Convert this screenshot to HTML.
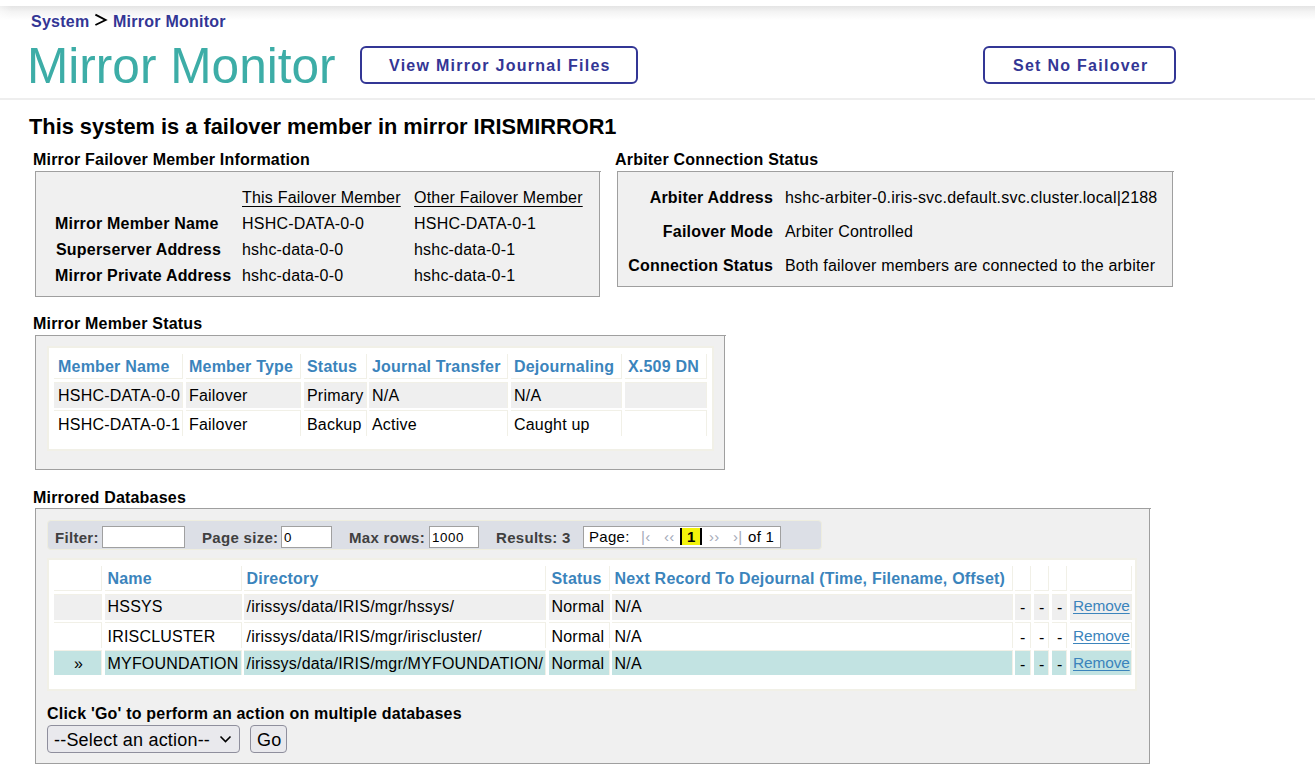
<!DOCTYPE html>
<html><head><meta charset="utf-8">
<style>
html,body{margin:0;padding:0;background:#fff;width:1315px;height:781px;overflow:hidden;position:relative;font-family:"Liberation Sans",sans-serif;color:#000;letter-spacing:0.2px;}
div,span{box-sizing:border-box;}
.a{position:absolute;white-space:nowrap;}
#shadow{position:absolute;left:0;top:6px;width:1315px;height:14px;background:linear-gradient(to bottom,#e4e4e4 0%,#f3f3f3 40%,#fff 100%);}
.crumb{font-size:16px;letter-spacing:0.25px;font-weight:bold;color:#333695;line-height:20px;}
#title{font-size:49.6px;color:#3DADA7;line-height:56px;}
.btn{position:absolute;height:38px;border:2px solid #333695;border-radius:6px;background:#fff;}
.btxt{color:#333695;font-weight:bold;font-size:16px;letter-spacing:1.27px;line-height:20px;}
#hr{position:absolute;left:0;top:98px;width:1315px;height:2px;background:#eeeeee;}
#h1{font-size:21.8px;font-weight:bold;line-height:26px;}
.sh{font-size:16px;font-weight:bold;line-height:20px;}
.box{position:absolute;background:#f0f0f0;border:1px solid #9f9f9f;}
.t{font-size:16px;line-height:20px;}
.b{font-weight:bold;}
.u{text-decoration:underline;text-underline-offset:3px;}
.tbl{position:absolute;background:#fff;border:2px solid #f1f0e7;}
.c{position:absolute;}
.th{border-right:1px solid #f1f0e7;border-bottom:1px solid #f1f0e7;}
.td{border-right:1px solid #f1f0e7;border-top:1px solid #f1f0e7;}
.g{background:#efefef;}
.sel{background:#c2e3e2;}
.hd{color:#3b84bc;font-weight:bold;}
.lnk{color:#3b84bc;text-decoration:underline;font-size:15.4px;letter-spacing:-0.1px;text-underline-offset:2px;}
.fb{position:absolute;background:#dcdfe6;border:1px solid #eeeddf;border-radius:4px;}
.fl{font-size:15px;font-weight:bold;color:#404040;line-height:20px;letter-spacing:0.3px;}
.p15{font-size:15px;line-height:20px;letter-spacing:0.3px;}
.iv{font-size:13.33px;line-height:20px;letter-spacing:0.6px;}
.inp{position:absolute;background:#fff;border:1px solid #a0a0a0;}
</style></head>
<body>
<div id="shadow"></div>
<div style="position:absolute;left:0;top:6px;width:12px;height:14px;background:linear-gradient(to right,rgba(255,255,255,0.45),rgba(255,255,255,0));"></div>
<div class="a crumb" style="left:31px;top:12px;">System</div>
<svg class="a" style="left:90px;top:10px" width="20" height="20" viewBox="90 10 20 20"><path d="M95.4 14.7 L105.6 20 L95.4 25" fill="none" stroke="#000" stroke-width="1.9" stroke-linejoin="miter"/></svg>
<div class="a crumb" style="left:113px;top:12px;">Mirror Monitor</div>
<div class="a " style="left:27px;top:38px;font-size:49.6px;color:#3DADA7;line-height:56px;letter-spacing:0;">Mirror Monitor</div>
<div class="btn" style="left:360px;top:46px;width:278px;height:38px;"></div>
<div class="a btxt" style="left:389px;top:56px;">View Mirror Journal Files</div>
<div class="btn" style="left:983px;top:46px;width:193px;height:38px;"></div>
<div class="a btxt" style="left:1013px;top:56px;">Set No Failover</div>
<div id="hr"></div>
<div class="a " style="left:29px;top:114px;font-size:21.8px;font-weight:bold;line-height:26px;letter-spacing:0;">This system is a failover member in mirror IRISMIRROR1</div>
<div class="a sh" style="left:33px;top:150px;">Mirror Failover Member Information</div>
<div class="box" style="left:35px;top:171px;width:565px;height:126px;"></div>
<div class="c" style="left:600px;top:171px;width:1px;height:1px;background:#9f9f9f;"></div>
<div class="a t u" style="left:242px;top:188px;">This Failover Member</div>
<div class="a t u" style="left:414px;top:188px;">Other Failover Member</div>
<div class="a t b" style="left:55px;top:214px;">Mirror Member Name</div>
<div class="a t" style="left:242px;top:214px;">HSHC-DATA-0-0</div>
<div class="a t" style="left:414px;top:214px;">HSHC-DATA-0-1</div>
<div class="a t b" style="left:56px;top:240px;">Superserver Address</div>
<div class="a t" style="left:242px;top:240px;">hshc-data-0-0</div>
<div class="a t" style="left:414px;top:240px;">hshc-data-0-1</div>
<div class="a t b" style="left:55px;top:266px;">Mirror Private Address</div>
<div class="a t" style="left:242px;top:266px;">hshc-data-0-0</div>
<div class="a t" style="left:414px;top:266px;">hshc-data-0-1</div>
<div class="a sh" style="left:615px;top:150px;">Arbiter Connection Status</div>
<div class="box" style="left:617px;top:171px;width:556px;height:116px;"></div>
<div class="c" style="left:1173px;top:171px;width:1px;height:1px;background:#9f9f9f;"></div>
<div class="a t b" style="right:542px;top:188px;">Arbiter Address</div>
<div class="a t" style="left:785px;top:188px;">hshc-arbiter-0.iris-svc.default.svc.cluster.local|2188</div>
<div class="a t b" style="right:542px;top:222px;">Failover Mode</div>
<div class="a t" style="left:785px;top:222px;">Arbiter Controlled</div>
<div class="a t b" style="right:542px;top:256px;">Connection Status</div>
<div class="a t" style="left:785px;top:256px;">Both failover members are connected to the arbiter</div>
<div class="a sh" style="left:33px;top:314px;">Mirror Member Status</div>
<div class="box" style="left:35px;top:335px;width:690px;height:135px;"></div>
<div class="c" style="left:725px;top:335px;width:1px;height:1px;background:#9f9f9f;"></div>
<div class="tbl" style="left:47px;top:346px;width:667px;height:105px;"></div>
<div class="c th" style="left:54px;top:354px;width:129px;height:25px;"></div>
<div class="a t hd" style="left:58px;top:357px;">Member Name</div>
<div class="c th" style="left:186px;top:354px;width:115px;height:25px;"></div>
<div class="a t hd" style="left:189px;top:357px;">Member Type</div>
<div class="c th" style="left:304px;top:354px;width:63px;height:25px;"></div>
<div class="a t hd" style="left:307px;top:357px;">Status</div>
<div class="c th" style="left:369px;top:354px;width:139px;height:25px;"></div>
<div class="a t hd" style="left:372px;top:357px;">Journal Transfer</div>
<div class="c th" style="left:511px;top:354px;width:111px;height:25px;"></div>
<div class="a t hd" style="left:514px;top:357px;">Dejournaling</div>
<div class="c th" style="left:625px;top:354px;width:82px;height:25px;"></div>
<div class="a t hd" style="left:628px;top:357px;">X.509 DN</div>
<div class="c td g" style="left:54px;top:382px;width:129px;height:26px;"></div>
<div class="a t" style="left:58px;top:386px;">HSHC-DATA-0-0</div>
<div class="c td g" style="left:186px;top:382px;width:115px;height:26px;"></div>
<div class="a t" style="left:189px;top:386px;">Failover</div>
<div class="c td g" style="left:304px;top:382px;width:63px;height:26px;"></div>
<div class="a t" style="left:307px;top:386px;">Primary</div>
<div class="c td g" style="left:369px;top:382px;width:139px;height:26px;"></div>
<div class="a t" style="left:372px;top:386px;">N/A</div>
<div class="c td g" style="left:511px;top:382px;width:111px;height:26px;"></div>
<div class="a t" style="left:514px;top:386px;">N/A</div>
<div class="c td g" style="left:625px;top:382px;width:82px;height:26px;"></div>
<div class="c td " style="left:54px;top:410px;width:129px;height:26px;"></div>
<div class="a t" style="left:58px;top:415px;">HSHC-DATA-0-1</div>
<div class="c td " style="left:186px;top:410px;width:115px;height:26px;"></div>
<div class="a t" style="left:189px;top:415px;">Failover</div>
<div class="c td " style="left:304px;top:410px;width:63px;height:26px;"></div>
<div class="a t" style="left:307px;top:415px;">Backup</div>
<div class="c td " style="left:369px;top:410px;width:139px;height:26px;"></div>
<div class="a t" style="left:372px;top:415px;">Active</div>
<div class="c td " style="left:511px;top:410px;width:111px;height:26px;"></div>
<div class="a t" style="left:514px;top:415px;">Caught up</div>
<div class="c td " style="left:625px;top:410px;width:82px;height:26px;"></div>
<div class="a sh" style="left:33px;top:488px;">Mirrored Databases</div>
<div class="box" style="left:35px;top:508px;width:1115px;height:256px;"></div>
<div class="c" style="left:1150px;top:508px;width:1px;height:1px;background:#9f9f9f;"></div>
<div class="fb" style="left:47px;top:520px;width:775px;height:30px;"></div>
<div class="a fl" style="left:55px;top:528px;">Filter:</div>
<div class="inp" style="left:102px;top:526px;width:83px;height:22px;"></div>
<div class="a fl" style="left:202px;top:528px;">Page size:</div>
<div class="inp" style="left:281px;top:526px;width:51px;height:22px;"></div>
<div class="a iv" style="left:284px;top:528px;">0</div>
<div class="a fl" style="left:349px;top:528px;">Max rows:</div>
<div class="inp" style="left:429px;top:526px;width:50px;height:22px;"></div>
<div class="a iv" style="left:432px;top:528px;">1000</div>
<div class="a fl" style="left:496px;top:528px;">Results: 3</div>
<div class="inp" style="left:583px;top:526px;width:198px;height:22px;"></div>
<div class="a p15" style="left:589px;top:527px;">Page:</div>
<div class="a p15" style="left:641px;top:527px;color:#a4a9b8;">|&lsaquo;</div>
<div class="a p15" style="left:664px;top:527px;color:#a4a9b8;">&lsaquo;&lsaquo;</div>
<div class="c" style="left:680px;top:528px;width:22px;height:17px;background:#f3f30a;border-left:2px solid #000;border-right:2px solid #000;"></div>
<div class="a p15 b" style="left:687px;top:527px;">1</div>
<div class="a p15" style="left:709px;top:527px;color:#a4a9b8;">&rsaquo;&rsaquo;</div>
<div class="a p15" style="left:733px;top:527px;color:#a4a9b8;">&rsaquo;|</div>
<div class="a p15" style="left:748px;top:527px;">of 1</div>
<div class="tbl" style="left:47px;top:558px;width:1090px;height:133px;"></div>
<div class="c th" style="left:54px;top:566px;width:48px;height:25px;"></div>
<div class="c th" style="left:105px;top:566px;width:137px;height:25px;"></div>
<div class="a t hd" style="left:107.5px;top:569px;">Name</div>
<div class="c th" style="left:244px;top:566px;width:302px;height:25px;"></div>
<div class="a t hd" style="left:246.5px;top:569px;">Directory</div>
<div class="c th" style="left:549px;top:566px;width:61px;height:25px;"></div>
<div class="a t hd" style="left:551.5px;top:569px;">Status</div>
<div class="c th" style="left:612px;top:566px;width:401px;height:25px;"></div>
<div class="a t hd" style="left:614.5px;top:569px;">Next Record To Dejournal (Time, Filename, Offset)</div>
<div class="c th" style="left:1015px;top:566px;width:16px;height:25px;"></div>
<div class="c th" style="left:1034px;top:566px;width:15px;height:25px;"></div>
<div class="c th" style="left:1052px;top:566px;width:15px;height:25px;"></div>
<div class="c th" style="left:1070px;top:566px;width:62px;height:25px;"></div>
<div class="c td g" style="left:54px;top:594px;width:48px;height:26px;"></div>
<div class="c td g" style="left:105px;top:594px;width:137px;height:26px;"></div>
<div class="a t" style="left:107.5px;top:597px;">HSSYS</div>
<div class="c td g" style="left:244px;top:594px;width:302px;height:26px;"></div>
<div class="a t" style="left:246.5px;top:597px;">/irissys/data/IRIS/mgr/hssys/</div>
<div class="c td g" style="left:549px;top:594px;width:61px;height:26px;"></div>
<div class="a t" style="left:551.5px;top:597px;">Normal</div>
<div class="c td g" style="left:612px;top:594px;width:401px;height:26px;"></div>
<div class="a t" style="left:614.5px;top:597px;">N/A</div>
<div class="c td g" style="left:1015px;top:594px;width:16px;height:26px;"></div>
<div class="a t" style="left:1020px;top:598px;">-</div>
<div class="c td g" style="left:1034px;top:594px;width:15px;height:26px;"></div>
<div class="a t" style="left:1039px;top:598px;">-</div>
<div class="c td g" style="left:1052px;top:594px;width:15px;height:26px;"></div>
<div class="a t" style="left:1057px;top:598px;">-</div>
<div class="c td g" style="left:1070px;top:594px;width:62px;height:26px;"></div>
<div class="a t" style="left:1073px;top:596px;"><span class="lnk">Remove</span></div>
<div class="c td " style="left:54px;top:622px;width:48px;height:26px;"></div>
<div class="c td " style="left:105px;top:622px;width:137px;height:26px;"></div>
<div class="a t" style="left:107.5px;top:626.5px;">IRISCLUSTER</div>
<div class="c td " style="left:244px;top:622px;width:302px;height:26px;"></div>
<div class="a t" style="left:246.5px;top:626.5px;">/irissys/data/IRIS/mgr/iriscluster/</div>
<div class="c td " style="left:549px;top:622px;width:61px;height:26px;"></div>
<div class="a t" style="left:551.5px;top:626.5px;">Normal</div>
<div class="c td " style="left:612px;top:622px;width:401px;height:26px;"></div>
<div class="a t" style="left:614.5px;top:626.5px;">N/A</div>
<div class="c td " style="left:1015px;top:622px;width:16px;height:26px;"></div>
<div class="a t" style="left:1020px;top:627.5px;">-</div>
<div class="c td " style="left:1034px;top:622px;width:15px;height:26px;"></div>
<div class="a t" style="left:1039px;top:627.5px;">-</div>
<div class="c td " style="left:1052px;top:622px;width:15px;height:26px;"></div>
<div class="a t" style="left:1057px;top:627.5px;">-</div>
<div class="c td " style="left:1070px;top:622px;width:62px;height:26px;"></div>
<div class="a t" style="left:1073px;top:625.5px;"><span class="lnk">Remove</span></div>
<div class="c td sel" style="left:54px;top:650px;width:48px;height:25px;"></div>
<div class="a t" style="left:74px;top:654px;">&raquo;</div>
<div class="c td sel" style="left:105px;top:650px;width:137px;height:25px;"></div>
<div class="a t" style="left:107.5px;top:654px;">MYFOUNDATION</div>
<div class="c td sel" style="left:244px;top:650px;width:302px;height:25px;"></div>
<div class="a t" style="left:246.5px;top:654px;">/irissys/data/IRIS/mgr/MYFOUNDATION/</div>
<div class="c td sel" style="left:549px;top:650px;width:61px;height:25px;"></div>
<div class="a t" style="left:551.5px;top:654px;">Normal</div>
<div class="c td sel" style="left:612px;top:650px;width:401px;height:25px;"></div>
<div class="a t" style="left:614.5px;top:654px;">N/A</div>
<div class="c td sel" style="left:1015px;top:650px;width:16px;height:25px;"></div>
<div class="a t" style="left:1020px;top:655px;">-</div>
<div class="c td sel" style="left:1034px;top:650px;width:15px;height:25px;"></div>
<div class="a t" style="left:1039px;top:655px;">-</div>
<div class="c td sel" style="left:1052px;top:650px;width:15px;height:25px;"></div>
<div class="a t" style="left:1057px;top:655px;">-</div>
<div class="c td sel" style="left:1070px;top:650px;width:62px;height:25px;"></div>
<div class="a t" style="left:1073px;top:653px;"><span class="lnk">Remove</span></div>
<div class="a sh" style="left:47px;top:704px;">Click 'Go' to perform an action on multiple databases</div>
<div class="c" style="left:47px;top:725px;width:193px;height:28px;background:#e9e9ed;border:1px solid #8f8f9d;border-radius:4px;"></div>
<div class="a t" style="left:54px;top:730px;font-size:18px;">--Select an action--</div>
<svg class="a" style="left:219px;top:734px" width="13" height="10" viewBox="0 0 13 10"><path d="M1.5 2.5 L6.5 7.5 L11.5 2.5" fill="none" stroke="#000" stroke-width="1.6"/></svg>
<div class="c" style="left:250px;top:725px;width:37px;height:28px;background:#e9e9ed;border:1px solid #8f8f9d;border-radius:4px;"></div>
<div class="a t" style="left:257px;top:730px;font-size:18px;">Go</div>
</body></html>
